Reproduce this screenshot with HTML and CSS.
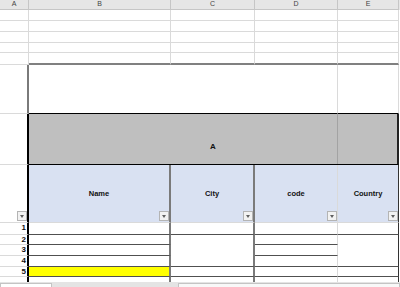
FILE: index.html
```html
<!DOCTYPE html>
<html lang="en">
<head>
    <meta charset="UTF-8">
    <title>Sheet</title>
    <link rel="stylesheet" href="styles.css">
</head>
<body>
    <div class="sheet">
        <!-- column letters -->
        <div class="c hd">A</div>
        <div class="c hd">B</div>
        <div class="c hd">C</div>
        <div class="c hd">D</div>
        <div class="c hd">E</div>
        <div class="end hd"></div>

        <!-- empty rows above the table -->
        <div class="c"></div><div class="c"></div><div class="c"></div><div class="c"></div><div class="c"></div><div class="end"></div>
        <div class="c"></div><div class="c"></div><div class="c"></div><div class="c"></div><div class="c"></div><div class="end"></div>
        <div class="c"></div><div class="c"></div><div class="c"></div><div class="c"></div><div class="c"></div><div class="end"></div>
        <div class="c"></div><div class="c"></div><div class="c"></div><div class="c"></div><div class="c"></div><div class="end"></div>
        <div class="c"></div><div class="c top-g"></div><div class="c top-g"></div><div class="c top-g"></div><div class="c top-g"></div><div class="end"></div>

        <!-- blank title block -->
        <div class="c ed-g"></div>
        <div class="c span3 line-k"></div>
        <div class="c line-k"></div>
        <div class="end"></div>

        <!-- grey band -->
        <div class="c ed-k"></div>
        <div class="c span4 band line-k"><span>A</span></div>
        <div class="end"></div>

        <!-- field header row -->
        <div class="c ed-k fld-a"><div class="drop"></div></div>
        <div class="c fld ed-g"><span>Name</span><div class="drop"></div></div>
        <div class="c fld ed-g"><span>City</span><div class="drop"></div></div>
        <div class="c fld"><span>code</span><div class="drop"></div></div>
        <div class="c fld ed-d"><span>Country</span><div class="drop"></div></div>
        <div class="end"></div>

        <!-- data rows -->
        <div class="c ed-k num">1</div>
        <div class="c ed-g dk"></div>
        <div class="c ed-g dk"></div>
        <div class="c dk"></div>
        <div class="c ed-d dk"></div>
        <div class="end"></div>

        <div class="c ed-k num">2</div>
        <div class="c ed-g dk"></div>
        <div class="c ed-g dk rows3"></div>
        <div class="c dk"></div>
        <div class="c ed-d dk rows3"></div>
        <div class="end"></div>

        <div class="c ed-k num">3</div>
        <div class="c ed-g dk"></div>
        <div class="c dk"></div>
        <div class="end"></div>

        <div class="c ed-k num">4</div>
        <div class="c ed-g dk"></div>
        <div class="c dk"></div>
        <div class="end"></div>

        <div class="c ed-k num">5</div>
        <div class="c ed-g dk mark"></div>
        <div class="c ed-g dk"></div>
        <div class="c dk"></div>
        <div class="c ed-d dk"></div>
        <div class="end"></div>

        <div class="c ed-k nb"></div>
        <div class="c ed-g nb"></div>
        <div class="c ed-g nb"></div>
        <div class="c nb"></div>
        <div class="c ed-d nb"></div>
        <div class="end"></div>

        <!-- sheet tabs / scrollbar -->
        <div class="bottombar">
            <div class="tab"></div>
            <div class="scroll"></div>
        </div>
    </div>
</body>
</html>
```

FILE: styles.css
```css
* {
    box-sizing: border-box;
}

body {
    margin: 0;
    background: #fff;
    font-family: "Liberation Sans", Arial, sans-serif;
    overflow: hidden;
}

.sheet {
    width: 400px;
    height: 287px;
    display: grid;
    grid-template-columns: 29px 142px 84px 83px 61px 1fr;
    grid-template-rows: 10px 11px 11px 11px 10px 12px 49px 51px 58px 12px 10px 11px 11px 10px 5px 5px;
}

.c {
    min-width: 0;
    border-right: 1px solid #dadada;
    border-bottom: 1px solid #dadada;
}

.end {
    min-width: 0;
}

.hd {
    background: #e6e6e6;
    border-color: #c6c6c6;
    color: #444;
    font-size: 7px;
    line-height: 8px;
    text-align: center;
}

.span3 {
    grid-column: span 3;
}

.span4 {
    grid-column: span 4;
}

.rows3 {
    grid-row: span 3;
}

.top-g {
    border-bottom: 2px solid #808080;
}

.ed-g {
    border-right: 2px solid #7a7a7a;
}

.ed-k {
    border-right: 2px solid #000;
}

.ed-d {
    border-right: 1px solid #333;
}

.line-k {
    border-bottom: 1px solid #000;
}

.dk {
    border-bottom: 1px solid #505050;
}

.nb {
    border-bottom: none;
}

.band {
    background: linear-gradient(#a3a3a3, #a3a3a3) 308px 0 / 1px 100% no-repeat, #bfbfbf;
    border-right: 2px solid #222;
    display: flex;
    justify-content: center;
    align-items: center;
    padding-top: 15px;
    font-size: 8px;
    font-weight: bold;
    color: #111;
}

.fld, .fld-a {
    display: grid;
    font-size: 7.5px;
    font-weight: bold;
    color: #111;
}

.fld {
    background: #d9e1f2;
}

.fld > span, .fld > .drop, .fld-a > .drop {
    grid-area: 1 / 1;
}

.fld > span {
    place-self: center;
}

.drop {
    place-self: end;
    width: 10px;
    height: 10px;
    margin-bottom: 1px;
    background: #f2f2f2;
    border: 1px solid #b4b4b4;
    display: flex;
    justify-content: center;
    align-items: center;
}

.drop::after {
    content: "";
    border-left: 2.5px solid transparent;
    border-right: 2.5px solid transparent;
    border-top: 3px solid #606060;
}

.num {
    font-size: 8px;
    font-weight: bold;
    line-height: 10px;
    text-align: right;
    padding-right: 1px;
    color: #111;
}

.mark {
    background: #ffff00;
}

.bottombar {
    grid-column: 1 / -1;
    background: #e4e4e4;
    display: flex;
    align-items: stretch;
    padding-top: 1px;
}

.tab {
    width: 52px;
    background: #fff;
    border: 1px solid #c4c4c4;
    border-bottom: none;
}

.scroll {
    margin-left: 126px;
    flex: 1;
    background: #f8f8f8;
    border: 1px solid #c4c4c4;
    border-bottom: none;
}
```
